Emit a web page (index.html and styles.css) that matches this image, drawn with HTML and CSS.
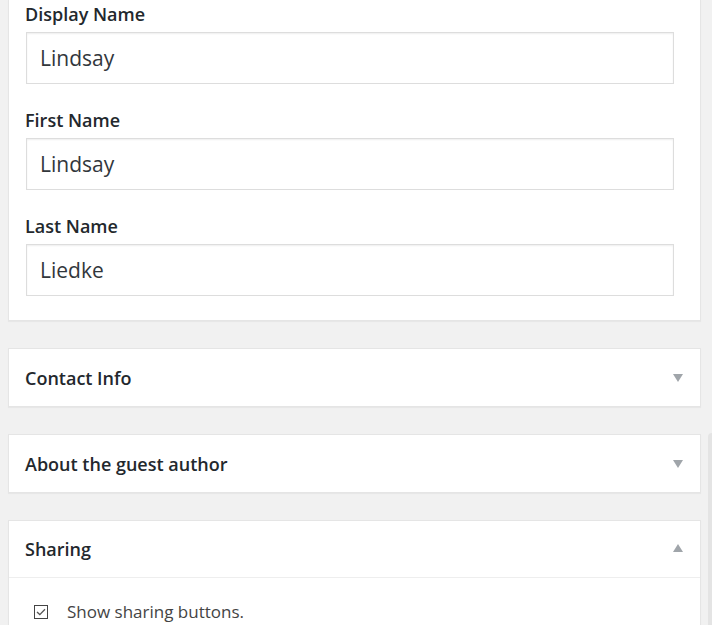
FILE: index.html
```html
<!DOCTYPE html>
<html lang="en">
<head>
<meta charset="utf-8">
<title>Profile</title>
<link rel="stylesheet" href="styles.css">
</head>
<body>
<div class="page">
  <section class="card card-open card-cut">
    <div class="card-body">
      <div class="field">
        <label class="field-label" for="dn">Display Name</label>
        <input class="field-input" id="dn" type="text" value="Lindsay">
      </div>
      <div class="field">
        <label class="field-label" for="fn">First Name</label>
        <input class="field-input" id="fn" type="text" value="Lindsay">
      </div>
      <div class="field">
        <label class="field-label" for="ln">Last Name</label>
        <input class="field-input" id="ln" type="text" value="Liedke">
      </div>
    </div>
  </section>

  <section class="card">
    <div class="card-head">
      <h2 class="card-title">Contact Info</h2>
      <span class="arrow arrow-down"></span>
    </div>
  </section>

  <section class="card">
    <div class="card-head">
      <h2 class="card-title">About the guest author</h2>
      <span class="arrow arrow-down"></span>
    </div>
  </section>

  <section class="card">
    <div class="card-head card-head-open">
      <h2 class="card-title">Sharing</h2>
      <span class="arrow arrow-up"></span>
    </div>
    <div class="card-content">
      <label class="check-row">
        <span class="checkbox">
          <svg width="10" height="8" viewBox="0 0 10 8"><path d="M1 4 L3.8 6.6 L9 1.2" fill="none" stroke="#555" stroke-width="1.3"/></svg>
        </span>
        <span class="check-text">Show sharing buttons.</span>
      </label>
    </div>
  </section>
</div>
<div class="scroll-strip"></div>
</body>
</html>
```

FILE: styles.css
```css
html, body {
  margin: 0;
  padding: 0;
  background: #f1f1f1;
  font-family: "Open Sans", "Noto Sans", sans-serif;
  color: #23282d;
  overflow: hidden;
}

.page {
  width: 693px;
  padding-left: 8px;
  display: flex;
  flex-direction: column;
  gap: 27px;
}

.card {
  background: #fff;
  border: 1px solid #e5e5e5;
  box-shadow: 0 1px 1px rgba(0, 0, 0, 0.04);
}

.card-cut {
  border-top: none;
}

.card-body {
  padding: 2px 26px 24px 17px;
  display: flex;
  flex-direction: column;
  gap: 24px;
}

.field {
  display: flex;
  flex-direction: column;
  gap: 6px;
}

.field-label {
  font-size: 18px;
  font-weight: 600;
  line-height: 24px;
  margin-left: -1px;
  color: #23282d;
}

.field-input {
  box-sizing: border-box;
  height: 52px;
  width: 648px;
  margin: 0;
  padding: 0 13px;
  border: 1px solid #ddd;
  box-shadow: inset 0 1px 2px rgba(0, 0, 0, 0.07);
  background: #fff;
  font-family: "Open Sans", "Noto Sans", sans-serif;
  font-size: 21px;
  color: #32373c;
  outline: none;
}

.card-head {
  height: 57px;
  display: flex;
  align-items: center;
  justify-content: space-between;
  padding: 0 17px 0 16px;
}

.card-head-open {
  height: 56px;
  border-bottom: 1px solid #eee;
}

.card-title {
  margin: 0;
  font-size: 18px;
  font-weight: 600;
  line-height: 24px;
  color: #23282d;
}

.arrow {
  width: 0;
  height: 0;
  border-left: 5px solid transparent;
  border-right: 5px solid transparent;
}

.arrow-down {
  border-top: 8px solid #a0a5aa;
  margin-top: 1px;
}

.arrow-up {
  border-bottom: 8px solid #a0a5aa;
  margin-top: -2px;
}

.card-content {
  padding: 22px 16px 40px 25px;
}

.check-row {
  display: flex;
  align-items: center;
  gap: 19px;
}

.checkbox {
  box-sizing: border-box;
  width: 14px;
  height: 14px;
  border: 1px solid #444;
  display: flex;
  align-items: center;
  justify-content: center;
}

.check-text {
  font-size: 17px;
  line-height: 23px;
  color: #444;
}

.scroll-strip {
  position: absolute;
  left: 708px;
  top: 433px;
  width: 6px;
  height: 200px;
  background: #e4e4e4;
  border-top-left-radius: 4px;
}
```
